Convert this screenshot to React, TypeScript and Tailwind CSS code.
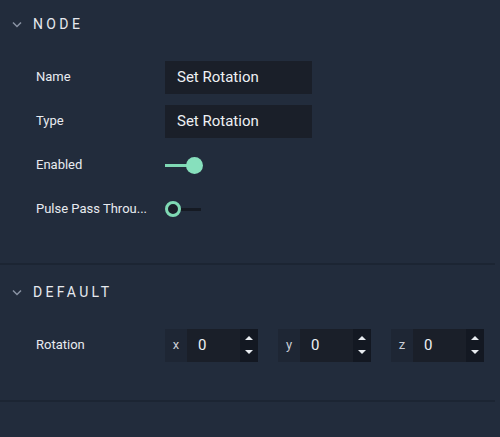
import React from "react";

const Chevron = () => (
  <svg width="10" height="7" viewBox="0 0 10 7" className="shrink-0">
    <path d="M1 1.5 L5 5.5 L9 1.5" fill="none" stroke="#8a93a3" strokeWidth="1.5" />
  </svg>
);

const Header = ({ title }: { title: string }) => (
  <div className="h-12 flex items-center pl-[12px] gap-[11px] pt-[1px]">
    <Chevron />
    <span className="text-[14px] tracking-[0.24em] text-[#e6e9ee]">{title}</span>
  </div>
);

const Row = ({ label, children }: { label: string; children: React.ReactNode }) => (
  <div className="h-11 flex items-center">
    <div className="w-[165px] shrink-0 pl-[36px] text-[13px] text-[#e8ebf0] whitespace-nowrap">{label}</div>
    {children}
  </div>
);

const TextInput = ({ value }: { value: string }) => (
  <div className="w-[147px] h-[33px] bg-[#1a1f29] flex items-center pl-[12px] text-[15px] text-[#eef0f3]">
    {value}
  </div>
);

const Spinner = () => (
  <div className="w-[18px] h-full bg-[#131822] flex flex-col items-center justify-center gap-[10px]">
    <svg width="8" height="4" viewBox="0 0 8 4">
      <path d="M0 4 L4 0 L8 4 Z" fill="#e8ebf0" />
    </svg>
    <svg width="8" height="4" viewBox="0 0 8 4">
      <path d="M0 0 L8 0 L4 4 Z" fill="#e8ebf0" />
    </svg>
  </div>
);

const NumberField = ({ axis }: { axis: string }) => (
  <div className="w-[93px] h-[33px] flex bg-[#1e2634]">
    <div className="w-[22px] flex items-center justify-center text-[13px] text-[#c9ced6]">{axis}</div>
    <div className="flex-1 bg-[#1a1f29] flex items-center pl-[11px] text-[15px] text-[#eef0f3]">0</div>
    <Spinner />
  </div>
);

export default function App() {
  return (
    <div
      className="w-[500px] h-[437px] bg-[#222c3c] overflow-hidden"
      style={{ fontFamily: "Roboto, 'Liberation Sans', sans-serif" }}
    >
      <Header title="NODE" />
      <div className="pt-[7px] pb-8">
        <Row label="Name">
          <TextInput value="Set Rotation" />
        </Row>
        <Row label="Type">
          <TextInput value="Set Rotation" />
        </Row>
        <Row label="Enabled">
          <div className="flex items-center">
            <div className="w-[24px] h-[3px] bg-[#7fd9b4]" />
            <div className="w-[17px] h-[17px] rounded-full bg-[#87e0bd] -ml-[3px]" />
          </div>
        </Row>
        <Row label="Pulse Pass Throu...">
          <div className="flex items-center">
            <div className="w-[16px] h-[16px] rounded-full border-[3px] border-[#7fd9b4] bg-[#1a1f29]" />
            <div className="w-[20px] h-[3px] bg-[#151a23]" />
          </div>
        </Row>
      </div>
      <div className="w-[495px] h-[2px] bg-[#1c2533]" />
      <div className="pt-[3px]">
        <Header title="DEFAULT" />
        <div className="pt-[7px] pb-[33px]">
          <Row label="Rotation">
            <div className="flex gap-[20px]">
              <NumberField axis="x" />
              <NumberField axis="y" />
              <NumberField axis="z" />
            </div>
          </Row>
        </div>
      </div>
      <div className="w-[495px] h-[2px] bg-[#1c2533]" />
    </div>
  );
}
